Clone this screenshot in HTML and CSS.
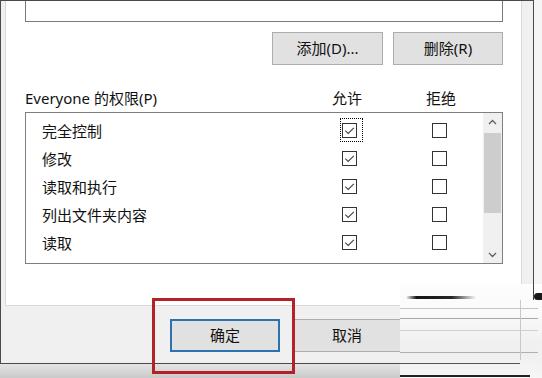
FILE: index.html
```html
<!DOCTYPE html>
<html lang="zh-CN">
<head>
<meta charset="utf-8">
<title>权限</title>
<link rel="stylesheet" href="styles.css">
</head>
<body>
<div class="screen">
  <div class="dialog">
    <div class="panel">
      <div class="names"></div>
      <div class="name-actions">
        <button class="btn add">添加(D)...</button>
        <button class="btn remove">删除(R)</button>
      </div>
      <div class="perm-header">
        <span class="perm-title">Everyone 的权限(P)</span>
        <span class="col">允许</span>
        <span class="col">拒绝</span>
      </div>
      <div class="perm-list">
        <div class="rows">
          <div class="row">
            <span class="name">完全控制</span>
            <span class="cell focus"><i class="cb"><svg viewBox="0 0 13 13" width="13" height="13"><polyline points="2.3,6.6 5.2,9.4 10.8,3.8" /></svg></i></span>
            <span class="cell"><i class="cb"></i></span>
          </div>
          <div class="row">
            <span class="name">修改</span>
            <span class="cell"><i class="cb"><svg viewBox="0 0 13 13" width="13" height="13"><polyline points="2.3,6.6 5.2,9.4 10.8,3.8" /></svg></i></span>
            <span class="cell"><i class="cb"></i></span>
          </div>
          <div class="row">
            <span class="name">读取和执行</span>
            <span class="cell"><i class="cb"><svg viewBox="0 0 13 13" width="13" height="13"><polyline points="2.3,6.6 5.2,9.4 10.8,3.8" /></svg></i></span>
            <span class="cell"><i class="cb"></i></span>
          </div>
          <div class="row">
            <span class="name">列出文件夹内容</span>
            <span class="cell"><i class="cb"><svg viewBox="0 0 13 13" width="13" height="13"><polyline points="2.3,6.6 5.2,9.4 10.8,3.8" /></svg></i></span>
            <span class="cell"><i class="cb"></i></span>
          </div>
          <div class="row">
            <span class="name">读取</span>
            <span class="cell"><i class="cb"><svg viewBox="0 0 13 13" width="13" height="13"><polyline points="2.3,6.6 5.2,9.4 10.8,3.8" /></svg></i></span>
            <span class="cell"><i class="cb"></i></span>
          </div>
          <div class="row">
            <span class="name"></span>
            <span class="cell"><i class="cb"></i></span>
            <span class="cell"><i class="cb"></i></span>
          </div>
        </div>
        <div class="scrollbar">
          <div class="arrow"><svg viewBox="0 0 9 6" width="9" height="6"><polyline points="1,5 4.5,1.5 8,5" /></svg></div>
          <div class="thumb"></div>
          <div class="track"></div>
          <div class="arrow"><svg viewBox="0 0 9 6" width="9" height="6"><polyline points="1,1 4.5,4.5 8,1" /></svg></div>
        </div>
      </div>
    </div>
    <div class="footer">
      <button class="btn ok">确定</button>
      <button class="btn cancel">取消</button>
    </div>
  </div>
  <div class="shadow"></div>

  <div class="highlight"></div>

  <div class="smear">
    <span class="s-dash"></span>
    <span class="s-blob"></span>
    <span class="s-edge"></span>
    <span class="s-line l1"></span>
    <span class="s-line l2"></span>
    <span class="s-line l3"></span>
    <span class="s-line l4"></span>
    <span class="s-line l5"></span>
    <span class="s-line l6"></span>
    <span class="s-vert"></span>
  </div>
</div>
</body>
</html>
```

FILE: styles.css
```css
* { box-sizing: border-box; }

html, body {
  margin: 0;
  padding: 0;
  background: #f4f4f4;
}

body {
  font-family: "Noto Sans", "Noto Sans CJK SC", sans-serif;
  font-size: 15px;
  color: #111;
}

.screen {
  position: relative;
  width: 542px;
  height: 378px;
  overflow: hidden;
  background: #f5f5f5;
}

.dialog {
  width: 534px;
  height: 364px;
  border: 1px solid #4a4a4a;
  background: #f0f0f0;
}

.panel {
  margin-left: 4px;
  width: 517px;
  height: 305px;
  background: #fff;
  border: 1px solid #dadada;
  border-top: none;
  padding-left: 19px;
}

.names {
  width: 478px;
  height: 21px;
  border: 1px solid #7a7a7a;
  border-top: none;
  background: #fff;
}

.name-actions {
  width: 478px;
  margin-top: 10px;
  display: flex;
  justify-content: flex-end;
  gap: 10px;
}

.btn {
  height: 33px;
  padding: 0;
  font-family: "Noto Sans", "Noto Sans CJK SC", sans-serif;
  font-size: 15px;
  color: #111;
  background: #e1e1e1;
  border: 1px solid #adadad;
  border-radius: 0;
  line-height: 31px;
}

.add { width: 111px; }
.remove { width: 110px; }

.perm-header {
  margin-top: 23px;
  height: 20px;
  line-height: 20px;
  display: grid;
  grid-template-columns: 307px 94px auto;
}

.perm-list {
  margin-top: 4px;
  width: 478px;
  height: 152px;
  border: 1px solid #7f7f7f;
  display: flex;
  overflow: hidden;
}

.rows {
  flex: 1;
  padding: 3px 0 0 16px;
  overflow: hidden;
}

.row {
  height: 28px;
  display: grid;
  grid-template-columns: 298px 90px auto;
  align-items: start;
}

.name {
  line-height: 30px;
  white-space: nowrap;
}

.cell {
  display: block;
  width: 23px;
  height: 24px;
  margin-top: 2px;
  padding: 5px 0 0 2px;
}

.focus {
  outline: 1px dotted #000;
  outline-offset: -1px;
}

.cb {
  display: block;
  width: 15px;
  height: 15px;
  border: 1px solid #333;
  background: #fff;
}

.cb svg {
  display: block;
}

.cb polyline {
  fill: none;
  stroke: #444;
  stroke-width: 1.1;
}

.scrollbar {
  width: 19px;
  display: flex;
  flex-direction: column;
  background: #f0f0f0;
}

.arrow {
  height: 17px;
  display: flex;
  align-items: center;
  justify-content: center;
}

.arrow polyline {
  fill: none;
  stroke: #606060;
  stroke-width: 1.3;
}

.thumb {
  margin: 3px 1px 0;
  height: 80px;
  background: #cdcdcd;
}

.track { flex: 1; }

.footer {
  height: 57px;
  padding: 13px 0 0 169px;
  display: flex;
  gap: 12px;
}

.ok {
  width: 110px;
  border: 2px solid #2a73b0;
  line-height: 29px;
}

.cancel { width: 110px; }

.shadow {
  height: 14px;
  background: linear-gradient(to bottom, #e4e4e4, #cacaca);
}

/* red annotation frame */
.highlight {
  position: absolute;
  left: 152px;
  top: 298px;
  width: 143px;
  height: 76px;
  border: 3px solid #b22227;
}

/* distorted bottom-right corner of the photo */
.smear {
  position: absolute;
  left: 400px;
  top: 284px;
  width: 142px;
  height: 94px;
  background: linear-gradient(to bottom, #fdfdfd 0%, #fafafa 30%, #f1f1f1 60%, #f0f0f0 75%, #f6f6f6 100%);
}

.s-dash {
  position: absolute;
  left: 6px;
  top: 12px;
  width: 70px;
  height: 3px;
  border-radius: 2px;
  background: linear-gradient(to right, rgba(20,20,20,0), #151515 15%, #262626 65%, rgba(40,40,40,0));
}

.s-blob {
  position: absolute;
  left: 134px;
  top: 9px;
  width: 10px;
  height: 7px;
  border-radius: 4px 0 0 4px;
  background: #1a1a1a;
}

.s-edge {
  position: absolute;
  left: 133px;
  top: 0;
  width: 1px;
  height: 16px;
  background: #444;
}

.s-line {
  position: absolute;
  left: 0;
  width: 138px;
  height: 1px;
}

.l1 { top: 24px; background: #c4c4c4; }
.l2 { top: 34px; background: #a8a8a8; }
.l3 { top: 46px; background: #d0d0d0; }
.l4 { top: 68px; background: #b0b0b0; }
.l5 { top: 79px; background: #555; width: 120px; }
.l6 { top: 91px; background: #222; height: 2px; width: 130px; }

.s-vert {
  position: absolute;
  left: 120px;
  top: 16px;
  width: 1px;
  height: 60px;
  background: #c8c8c8;
}
```
